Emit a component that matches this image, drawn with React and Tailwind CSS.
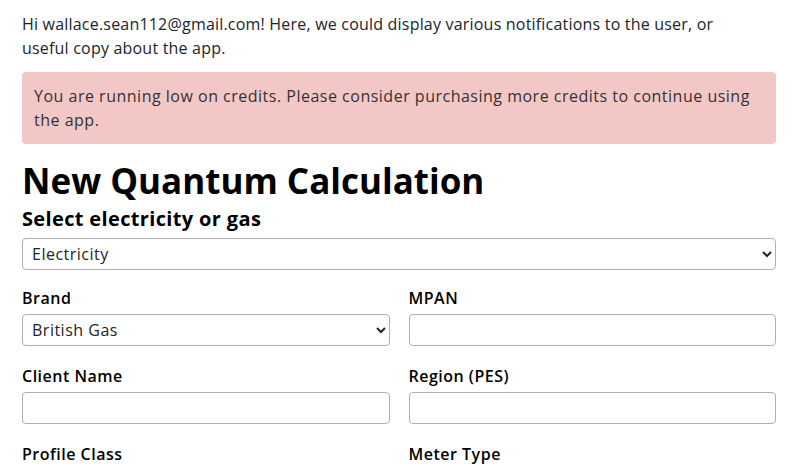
import React from 'react';

const Field = ({ label, children }) => (
  <div className="flex flex-col">
    <label className="text-[16px] font-semibold leading-6 tracking-[0.5px] mb-1 text-black">{label}</label>
    {children}
  </div>
);

const inputCls = 'h-8 w-full rounded border border-[#b0b0b0] bg-white px-[5px] text-[16px] tracking-[0.5px] text-[#212529]';

export default function App() {
  return (
    <div className="min-h-screen bg-white font-['Open_Sans',sans-serif] text-[#212529] pl-[22px] pr-[20px] pt-3">
      <p className="max-w-[730px] text-[16px] leading-6 tracking-[0.2px]">
        Hi wallace.sean112@gmail.com! Here, we could display various notifications to the user, or useful copy about the app.
      </p>

      <div className="mt-3 rounded bg-[#f4c7c7] px-3 py-3 text-[16px] leading-6 tracking-[0.5px] text-[#333]">
        You are running low on credits. Please consider purchasing more credits to continue using the app.
      </div>

      <h1 className="mt-[15px] text-[35px] font-bold leading-[43px] text-black">New Quantum Calculation</h1>

      <div className="mt-[3px]">
        <label className="block text-[20px] font-bold leading-[27px] tracking-[0.35px] mb-[6px] text-black">
          Select electricity or gas
        </label>
        <select className={inputCls} defaultValue="Electricity">
          <option>Electricity</option>
          <option>Gas</option>
        </select>
      </div>

      <div className="mt-[16px] grid grid-cols-2 gap-x-[19px] gap-y-[18px]">
        <Field label="Brand">
          <select className={inputCls} defaultValue="British Gas">
            <option>British Gas</option>
          </select>
        </Field>
        <Field label="MPAN">
          <input className={inputCls} />
        </Field>
        <Field label="Client Name">
          <input className={inputCls} />
        </Field>
        <Field label="Region (PES)">
          <input className={inputCls} />
        </Field>
        <Field label="Profile Class">
          <input className={inputCls} />
        </Field>
        <Field label="Meter Type">
          <input className={inputCls} />
        </Field>
      </div>
    </div>
  );
}
